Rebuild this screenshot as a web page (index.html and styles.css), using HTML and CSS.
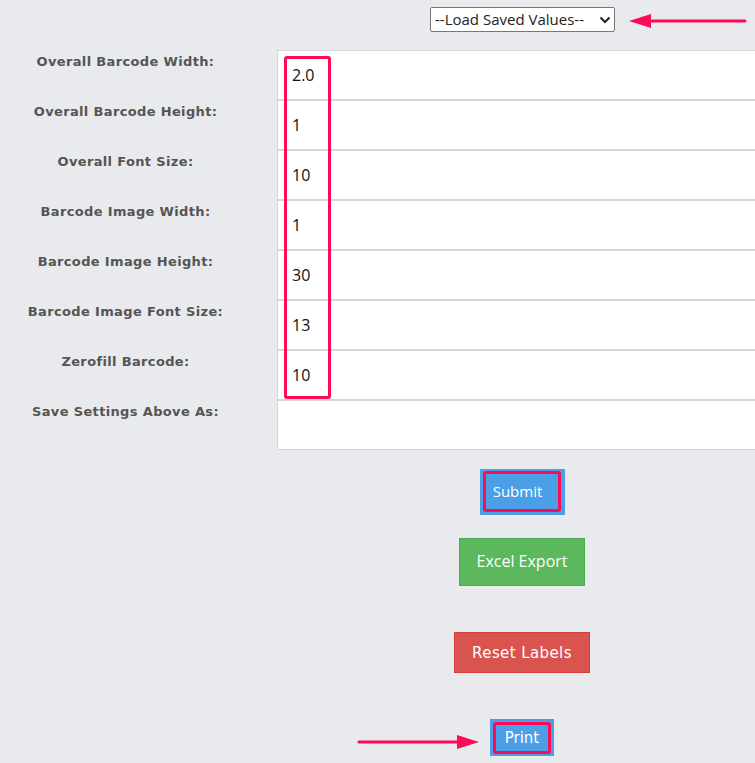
FILE: index.html
```html
<!DOCTYPE html>
<html>
<head>
<meta charset="utf-8">
<link rel="stylesheet" href="styles.css">
</head>
<body>
<div class="page">
  <div class="topbar">
    <div class="selectwrap">
      <select class="saved">
        <option>--Load Saved Values--</option>
      </select>
      <svg class="chev" width="12" height="8" viewBox="0 0 12 8"><polyline points="1.5,1.5 6,6 10.5,1.5" fill="none" stroke="#222" stroke-width="2"/></svg>
    </div>
  </div>
  <div class="form">
    <label class="lbl">Overall Barcode Width:</label><input class="fld" value="2.0">
    <label class="lbl">Overall Barcode Height:</label><input class="fld" value="1">
    <label class="lbl">Overall Font Size:</label><input class="fld" value="10">
    <label class="lbl">Barcode Image Width:</label><input class="fld" value="1">
    <label class="lbl">Barcode Image Height:</label><input class="fld" value="30">
    <label class="lbl">Barcode Image Font Size:</label><input class="fld" value="13">
    <label class="lbl">Zerofill Barcode:</label><input class="fld" value="10">
    <label class="lbl">Save Settings Above As:</label><input class="fld" value="">
  </div>
  <div class="actions">
    <button class="btn btn-blue btn-submit"><span class="mark">Submit</span></button>
    <button class="btn btn-green">Excel Export</button>
    <button class="btn btn-red">Reset Labels</button>
    <button class="btn btn-blue btn-print"><span class="mark">Print</span></button>
  </div>

  <div class="valuebox"></div>
  <svg class="arrow arrow-top" width="120" height="20" viewBox="0 0 120 20">
    <line x1="20" y1="10" x2="116" y2="10" stroke="#ff0a54" stroke-width="3" stroke-linecap="round"/>
    <polygon points="0,10 22,3 22,17" fill="#ff0a54"/>
  </svg>
  <svg class="arrow arrow-bottom" width="124" height="20" viewBox="0 0 124 20">
    <line x1="2" y1="10" x2="100" y2="10" stroke="#ff0a54" stroke-width="3" stroke-linecap="round"/>
    <polygon points="122,10 100,3 100,17" fill="#ff0a54"/>
  </svg>
</div>
</body>
</html>
```
FILE: styles.css
```css
html, body {
  margin: 0;
  padding: 0;
  background: #e9eaee;
  overflow: hidden;
}
.page {
  position: relative;
  width: 755px;
  height: 763px;
  overflow: hidden;
  background: #e9eaee;
}
.topbar {
  height: 50px;
  box-sizing: border-box;
  padding: 7px 0 0 430px;
}
.selectwrap {
  position: relative;
  width: 185px;
  height: 25px;
}
.saved {
  -webkit-appearance: none;
  appearance: none;
  width: 185px;
  height: 25px;
  box-sizing: border-box;
  font-family: "Open Sans", "Noto Sans", sans-serif;
  font-size: 15px;
  color: #222;
  background: #fff;
  border: 1px solid #767676;
  border-radius: 2px;
  padding: 0 0 0 4px;
  line-height: 23px;
}
.chev {
  position: absolute;
  right: 4px;
  top: 9px;
  pointer-events: none;
}
.form {
  display: grid;
  grid-template-columns: 277px 500px;
  width: 777px;
}
.lbl {
  height: 50px;
  box-sizing: border-box;
  padding: 4px 26px 0 0;
  text-align: center;
  font-family: "DejaVu Sans", Verdana, sans-serif;
  font-weight: bold;
  font-size: 13px;
  line-height: 16px;
  color: #555;
  letter-spacing: 0.35px;
}
.fld {
  display: block;
  height: 50px;
  box-sizing: border-box;
  margin: 0;
  border: 1px solid #d4d7dd;
  background: #fff;
  padding: 0 0 0 14px;
  font-family: "Open Sans", "Noto Sans", sans-serif;
  font-size: 16px;
  color: #111;
  outline: none;
}
.actions {
  margin-left: 277px;
  width: 490px;
  display: flex;
  flex-direction: column;
  align-items: center;
}
.btn {
  font-size: 15px;
  color: #fff;
  margin: 0;
  cursor: pointer;
  border-radius: 0;
}
.btn-blue {
  background: #4a9fe6;
  border: none;
}
.mark {
  display: block;
  border: 3px solid #ff0a54;
  border-radius: 3px;
  box-sizing: border-box;
}
.btn-submit {
  margin-top: 19px;
  width: 85px;
  height: 46px;
  padding: 2px 4px 3px 3px;
  font-family: "Open Sans", "Noto Sans", sans-serif;
}
.btn-submit .mark {
  height: 41px;
  line-height: 34px;
  padding-right: 8px;
}
.btn-green {
  margin-top: 23px;
  width: 126px;
  height: 48px;
  background: #5cb85c;
  border: 1px solid #4cae4c;
  font-family: "Open Sans", "Noto Sans", sans-serif;
  font-size: 16px;
  padding: 0 0 2px 0;
}
.btn-red {
  margin-top: 46px;
  width: 136px;
  height: 41px;
  background: #d9534f;
  border: 1px solid #d43f3a;
  font-family: "DejaVu Sans", Verdana, sans-serif;
  font-size: 15px;
  letter-spacing: 0.4px;
}
.btn-print {
  margin-top: 46px;
  width: 64px;
  height: 37px;
  padding: 3px 3px 2px 3px;
  font-family: "DejaVu Sans", Verdana, sans-serif;
  font-size: 15px;
}
.btn-print .mark {
  height: 32px;
  line-height: 26px;
}
.valuebox {
  position: absolute;
  left: 284px;
  top: 56px;
  width: 47px;
  height: 343px;
  box-sizing: border-box;
  border: 3px solid #ff0a54;
  border-radius: 3px;
}
.arrow {
  position: absolute;
}
.arrow-top {
  left: 629px;
  top: 11px;
}
.arrow-bottom {
  left: 357px;
  top: 732px;
}
```
